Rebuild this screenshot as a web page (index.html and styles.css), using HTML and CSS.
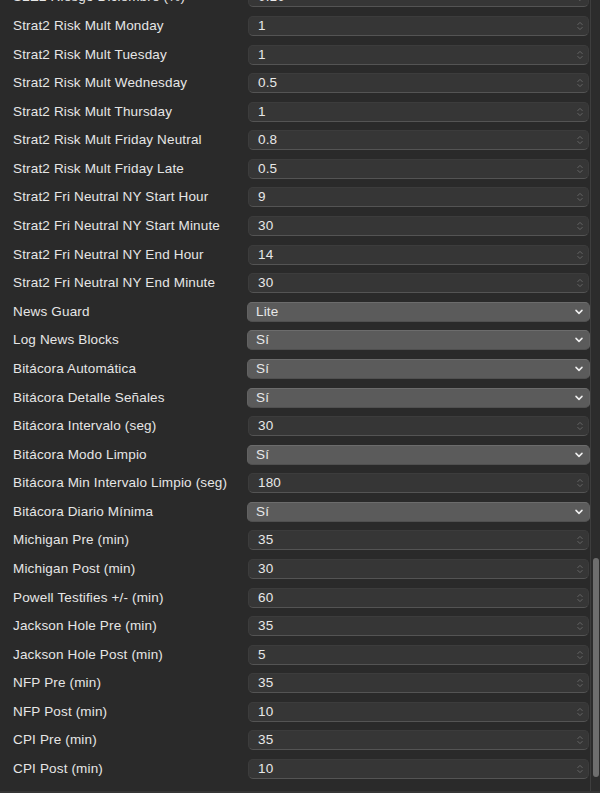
FILE: index.html
```html
<!DOCTYPE html>
<html lang="es">
<head>
<meta charset="utf-8">
<title>Settings</title>
<link rel="stylesheet" href="styles.css">
</head>
<body>
<div class="app">
  <div class="pane">
    <div class="form">
      <div class="label">S2E2 Riesgo Diciembre (%)</div><div class="field num"><span>0.10</span><svg class="spin" viewBox="0 0 8 12"><path d="M1.8 4.6 L4 2.4 L6.2 4.6 M1.8 7.4 L4 9.6 L6.2 7.4"/></svg></div>
      <div class="label">Strat2 Risk Mult Monday</div><div class="field num"><span>1</span><svg class="spin" viewBox="0 0 8 12"><path d="M1.8 4.6 L4 2.4 L6.2 4.6 M1.8 7.4 L4 9.6 L6.2 7.4"/></svg></div>
      <div class="label">Strat2 Risk Mult Tuesday</div><div class="field num"><span>1</span><svg class="spin" viewBox="0 0 8 12"><path d="M1.8 4.6 L4 2.4 L6.2 4.6 M1.8 7.4 L4 9.6 L6.2 7.4"/></svg></div>
      <div class="label">Strat2 Risk Mult Wednesday</div><div class="field num"><span>0.5</span><svg class="spin" viewBox="0 0 8 12"><path d="M1.8 4.6 L4 2.4 L6.2 4.6 M1.8 7.4 L4 9.6 L6.2 7.4"/></svg></div>
      <div class="label">Strat2 Risk Mult Thursday</div><div class="field num"><span>1</span><svg class="spin" viewBox="0 0 8 12"><path d="M1.8 4.6 L4 2.4 L6.2 4.6 M1.8 7.4 L4 9.6 L6.2 7.4"/></svg></div>
      <div class="label">Strat2 Risk Mult Friday Neutral</div><div class="field num"><span>0.8</span><svg class="spin" viewBox="0 0 8 12"><path d="M1.8 4.6 L4 2.4 L6.2 4.6 M1.8 7.4 L4 9.6 L6.2 7.4"/></svg></div>
      <div class="label">Strat2 Risk Mult Friday Late</div><div class="field num"><span>0.5</span><svg class="spin" viewBox="0 0 8 12"><path d="M1.8 4.6 L4 2.4 L6.2 4.6 M1.8 7.4 L4 9.6 L6.2 7.4"/></svg></div>
      <div class="label">Strat2 Fri Neutral NY Start Hour</div><div class="field num"><span>9</span><svg class="spin" viewBox="0 0 8 12"><path d="M1.8 4.6 L4 2.4 L6.2 4.6 M1.8 7.4 L4 9.6 L6.2 7.4"/></svg></div>
      <div class="label">Strat2 Fri Neutral NY Start Minute</div><div class="field num"><span>30</span><svg class="spin" viewBox="0 0 8 12"><path d="M1.8 4.6 L4 2.4 L6.2 4.6 M1.8 7.4 L4 9.6 L6.2 7.4"/></svg></div>
      <div class="label">Strat2 Fri Neutral NY End Hour</div><div class="field num"><span>14</span><svg class="spin" viewBox="0 0 8 12"><path d="M1.8 4.6 L4 2.4 L6.2 4.6 M1.8 7.4 L4 9.6 L6.2 7.4"/></svg></div>
      <div class="label">Strat2 Fri Neutral NY End Minute</div><div class="field num"><span>30</span><svg class="spin" viewBox="0 0 8 12"><path d="M1.8 4.6 L4 2.4 L6.2 4.6 M1.8 7.4 L4 9.6 L6.2 7.4"/></svg></div>
      <div class="label">News Guard</div><div class="field sel"><span>Lite</span><svg class="chev" viewBox="0 0 10 6"><path d="M2 1.4 L5 4.4 L8 1.4"/></svg></div>
      <div class="label">Log News Blocks</div><div class="field sel"><span>Sí</span><svg class="chev" viewBox="0 0 10 6"><path d="M2 1.4 L5 4.4 L8 1.4"/></svg></div>
      <div class="label">Bitácora Automática</div><div class="field sel"><span>Sí</span><svg class="chev" viewBox="0 0 10 6"><path d="M2 1.4 L5 4.4 L8 1.4"/></svg></div>
      <div class="label">Bitácora Detalle Señales</div><div class="field sel"><span>Sí</span><svg class="chev" viewBox="0 0 10 6"><path d="M2 1.4 L5 4.4 L8 1.4"/></svg></div>
      <div class="label">Bitácora Intervalo (seg)</div><div class="field num"><span>30</span><svg class="spin" viewBox="0 0 8 12"><path d="M1.8 4.6 L4 2.4 L6.2 4.6 M1.8 7.4 L4 9.6 L6.2 7.4"/></svg></div>
      <div class="label">Bitácora Modo Limpio</div><div class="field sel"><span>Sí</span><svg class="chev" viewBox="0 0 10 6"><path d="M2 1.4 L5 4.4 L8 1.4"/></svg></div>
      <div class="label">Bitácora Min Intervalo Limpio (seg)</div><div class="field num"><span>180</span><svg class="spin" viewBox="0 0 8 12"><path d="M1.8 4.6 L4 2.4 L6.2 4.6 M1.8 7.4 L4 9.6 L6.2 7.4"/></svg></div>
      <div class="label">Bitácora Diario Mínima</div><div class="field sel"><span>Sí</span><svg class="chev" viewBox="0 0 10 6"><path d="M2 1.4 L5 4.4 L8 1.4"/></svg></div>
      <div class="label">Michigan Pre (min)</div><div class="field num"><span>35</span><svg class="spin" viewBox="0 0 8 12"><path d="M1.8 4.6 L4 2.4 L6.2 4.6 M1.8 7.4 L4 9.6 L6.2 7.4"/></svg></div>
      <div class="label">Michigan Post (min)</div><div class="field num"><span>30</span><svg class="spin" viewBox="0 0 8 12"><path d="M1.8 4.6 L4 2.4 L6.2 4.6 M1.8 7.4 L4 9.6 L6.2 7.4"/></svg></div>
      <div class="label">Powell Testifies +/- (min)</div><div class="field num"><span>60</span><svg class="spin" viewBox="0 0 8 12"><path d="M1.8 4.6 L4 2.4 L6.2 4.6 M1.8 7.4 L4 9.6 L6.2 7.4"/></svg></div>
      <div class="label">Jackson Hole Pre (min)</div><div class="field num"><span>35</span><svg class="spin" viewBox="0 0 8 12"><path d="M1.8 4.6 L4 2.4 L6.2 4.6 M1.8 7.4 L4 9.6 L6.2 7.4"/></svg></div>
      <div class="label">Jackson Hole Post (min)</div><div class="field num"><span>5</span><svg class="spin" viewBox="0 0 8 12"><path d="M1.8 4.6 L4 2.4 L6.2 4.6 M1.8 7.4 L4 9.6 L6.2 7.4"/></svg></div>
      <div class="label">NFP Pre (min)</div><div class="field num"><span>35</span><svg class="spin" viewBox="0 0 8 12"><path d="M1.8 4.6 L4 2.4 L6.2 4.6 M1.8 7.4 L4 9.6 L6.2 7.4"/></svg></div>
      <div class="label">NFP Post (min)</div><div class="field num"><span>10</span><svg class="spin" viewBox="0 0 8 12"><path d="M1.8 4.6 L4 2.4 L6.2 4.6 M1.8 7.4 L4 9.6 L6.2 7.4"/></svg></div>
      <div class="label">CPI Pre (min)</div><div class="field num"><span>35</span><svg class="spin" viewBox="0 0 8 12"><path d="M1.8 4.6 L4 2.4 L6.2 4.6 M1.8 7.4 L4 9.6 L6.2 7.4"/></svg></div>
      <div class="label">CPI Post (min)</div><div class="field num"><span>10</span><svg class="spin" viewBox="0 0 8 12"><path d="M1.8 4.6 L4 2.4 L6.2 4.6 M1.8 7.4 L4 9.6 L6.2 7.4"/></svg></div>
    </div>
  </div>
  <div class="scrollbar"><div class="thumb"></div></div>
</div>
</body>
</html>
```

FILE: styles.css
```css
html, body {
  margin: 0;
  padding: 0;
  background: #2a2a2a;
}
body {
  font-family: "Liberation Sans", Arial, sans-serif;
  font-size: 13.5px;
  letter-spacing: 0.16px;
  color: #e4e4e4;
}
.app {
  display: flex;
  height: 793px;
  overflow: hidden;
  box-sizing: border-box;
  border-bottom: 2px solid #353535;
}
.pane {
  flex: 0 0 590px;
  overflow: hidden;
}
.form {
  display: grid;
  grid-template-columns: 235px 1fr;
  grid-auto-rows: 20px;
  row-gap: 8.58px;
  padding: 0 1px 0 13px;
  margin-top: -12.6px;
}
.label {
  align-self: center;
  white-space: nowrap;
  color: #e6e6e6;
  line-height: 16px;
}
.field {
  display: flex;
  align-items: center;
  justify-content: space-between;
  box-sizing: border-box;
  height: 20px;
  border-radius: 5px;
  line-height: 16px;
  color: #e8e8e8;
}
.num {
  background: #363636;
  border: 1px solid #3c3c3c;
  border-bottom-color: #545454;
  padding: 0 4px 0 9px;
}
.sel {
  background: #5b5b5b;
  border: 1px solid #626262;
  border-top-color: #6c6c6c;
  border-bottom-color: #505050;
  padding: 0 5px 0 8px;
  margin-left: -1px;
  margin-right: -1px;
}
.spin {
  width: 8px;
  height: 12px;
  fill: none;
  stroke: #666666;
  stroke-width: 1;
  stroke-linecap: round;
  stroke-linejoin: round;
}
.chev {
  width: 10px;
  height: 6px;
  fill: none;
  stroke: #f0f0f0;
  stroke-width: 1.5;
  stroke-linecap: round;
  stroke-linejoin: round;
}
.scrollbar {
  flex: 1 1 auto;
  background: #2c2c2c;
  border-left: 1px solid #3e3e3e;
  display: flex;
  flex-direction: column;
  align-items: flex-end;
}
.thumb {
  width: 6px;
  height: 219px;
  margin-top: 558px;
  margin-right: 1px;
  border-radius: 3px;
  background: #6e6e6e;
}
```
